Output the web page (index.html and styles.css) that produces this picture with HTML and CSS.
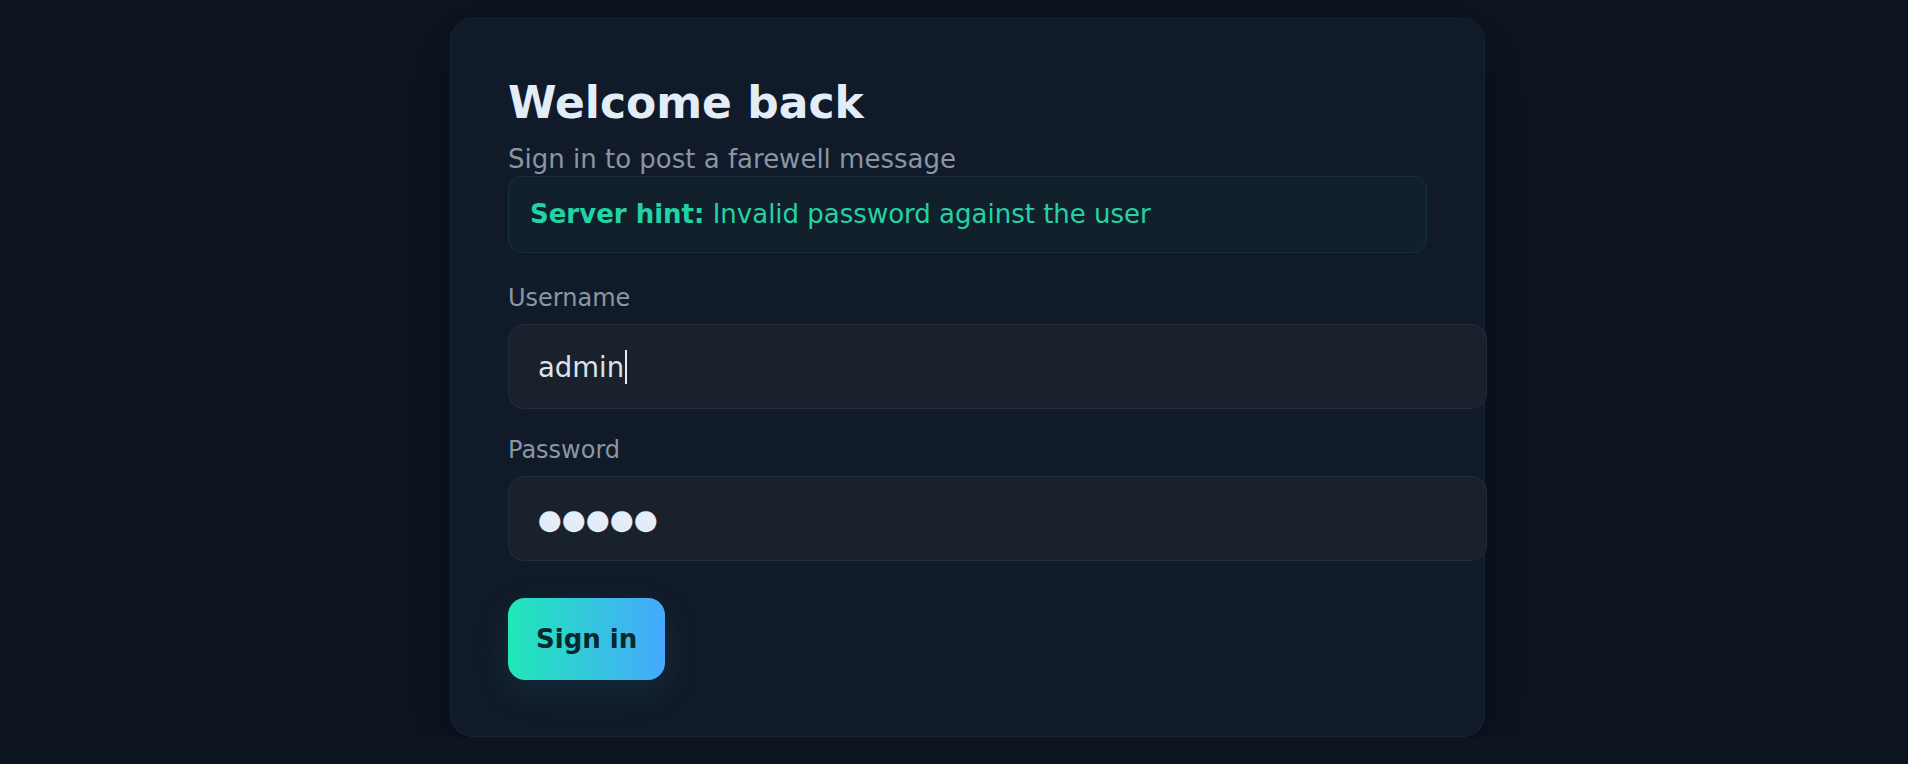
FILE: index.html
```html
<!DOCTYPE html>
<html lang="en">
<head>
<meta charset="utf-8">
<title>Sign in</title>
<link rel="stylesheet" href="styles.css">
</head>
<body>
<main class="shell">
  <section class="card">
    <h1 class="title">Welcome back</h1>
    <p class="subtitle">Sign in to post a farewell message</p>
    <div class="hint"><strong>Server hint:</strong> Invalid password against the user</div>
    <form class="form">
      <div class="field">
        <span class="label">Username</span>
        <div class="input" role="textbox"><span class="value">admin</span><span class="caret"></span></div>
      </div>
      <div class="field">
        <span class="label">Password</span>
        <div class="input" role="textbox"><span class="value dots">●●●●●</span></div>
      </div>
      <div class="actions">
        <button class="btn" type="button">Sign in</button>
      </div>
    </form>
  </section>
</main>
</body>
</html>
```
FILE: styles.css
```css
html, body {
  margin: 0;
  padding: 0;
  background: #0d1521;
  min-height: 100%;
}
body {
  font-family: "DejaVu Sans", "Liberation Sans", sans-serif;
  color: #e3edf8;
}
.shell {
  width: 1008px;
  margin: 18px auto 0;
}
.card {
  box-sizing: border-box;
  width: 1035px;
  padding: 58px 57px 56px;
  background: #111a28;
  border: 1px solid #1b2433;
  border-radius: 22px;
  box-shadow: 0 20px 60px rgba(3, 7, 14, 0.55);
}
.title {
  margin: 0 0 16px;
  font-size: 44px;
  font-weight: 700;
  line-height: normal;
  color: #e3edf8;
}
.subtitle {
  margin: 0 0 2px;
  font-size: 26px;
  line-height: normal;
  color: #8a95a5;
}
.hint {
  padding: 22px 21px;
  font-size: 26px;
  line-height: 31px;
  color: #22d3a6;
  background: #12202c;
  border: 1px solid #183039;
  border-radius: 14px;
}
.hint strong {
  font-weight: 700;
}
.form {
  display: flex;
  flex-direction: column;
  gap: 27px;
  margin-top: 31px;
}
.field {
  display: flex;
  flex-direction: column;
  gap: 12px;
}
.label {
  font-size: 24px;
  line-height: 28px;
  color: #8b96a5;
}
.input {
  box-sizing: content-box;
  width: 100%;
  height: 83px;
  padding: 0 29px;
  display: flex;
  align-items: center;
  font-size: 27.5px;
  color: #dbe3ec;
  background: #19212d;
  border: 1px solid #222c3a;
  border-radius: 16px;
}
.value {
  white-space: pre;
}
.dots {
  color: #e3edf8;
  letter-spacing: 0;
}
.caret {
  width: 2px;
  height: 34px;
  margin-left: 1px;
  background: #e3edf8;
}
.actions {
  margin-top: 10px;
}
.btn {
  padding: 26px 28px;
  font-family: "DejaVu Sans", sans-serif;
  font-size: 26px;
  font-weight: 700;
  line-height: 30px;
  color: #06292c;
  background: linear-gradient(90deg, #20e8b8, #46a8ff);
  border: 0;
  border-radius: 17px;
  box-shadow: 0 12px 34px rgba(40, 170, 200, 0.12);
  cursor: pointer;
}
```
